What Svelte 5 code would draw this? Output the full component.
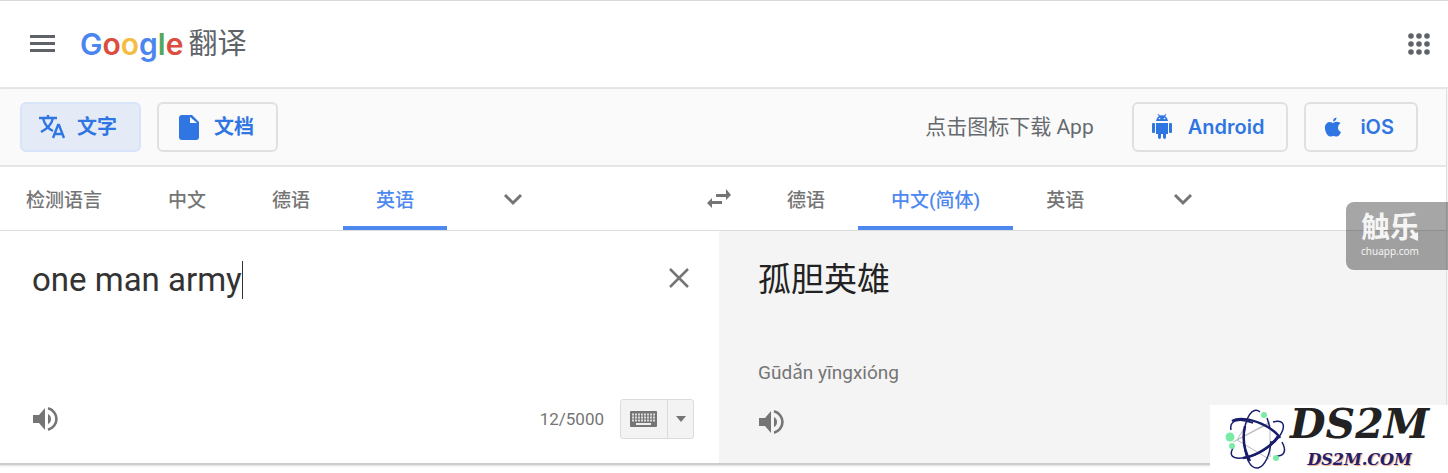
<script lang="ts">
	const MAX_LENGTH = 5000;
	const sourceLanguages = ['检测语言', '中文', '德语', '英语'];
	const targetLanguages = ['德语', '中文(简体)', '英语'];
	const brand = [
		{ letter: 'G', color: 'blue' },
		{ letter: 'o', color: 'red' },
		{ letter: 'o', color: 'yellow' },
		{ letter: 'g', color: 'blue' },
		{ letter: 'l', color: 'green' },
		{ letter: 'e', color: 'red' }
	];
	const dots = [4, 12, 20];

	let text = $state('one man army');
	let source = $state('英语');
	let target = $state('中文(简体)');
	let mode = $state('text');

	function swap() {
		const previous = source;
		source = sourceLanguages.includes(target) ? target : '中文';
		target = targetLanguages.includes(previous) ? previous : '中文(简体)';
	}
</script>

{#snippet chevron()}
	<svg width="20" height="20" viewBox="0 0 20 20" fill="none" aria-hidden="true">
		<path d="M2 6l8 8 8-8" stroke="currentColor" stroke-width="3" />
	</svg>
{/snippet}

{#snippet speaker()}
	<svg width="26" height="26" viewBox="0 0 26 26" fill="currentColor" aria-hidden="true">
		<path d="M1 9v8h6l6 7V2L7 9zM16 8v10q3-1.500 3-5t-3-5z" />
		<path d="M16 2.300a11 11 0 0 1 0 21.400" fill="none" stroke="currentColor" stroke-width="2.600" />
	</svg>
{/snippet}

<div class="page">
	<header>
		<button class="icon-button" aria-label="主菜单">
			<svg width="26" height="18" viewBox="0 0 26 18" fill="currentColor" aria-hidden="true">
				<path d="M0 0h25v3H0zM0 7h25v3H0zM0 14h25v3H0z" />
			</svg>
		</button>
		<a class="logo" href="/">
			<span class="brand">{#each brand as { letter, color }}<span class={color}>{letter}</span>{/each}</span>
			<span class="product">翻译</span>
		</a>
		<button class="icon-button apps" aria-label="Google 应用">
			<svg width="24" height="24" viewBox="0 0 24 24" fill="currentColor" aria-hidden="true">
				{#each dots as y}
					{#each dots as x}
						<circle cx={x} cy={y} r="2.800" />
					{/each}
				{/each}
			</svg>
		</button>
	</header>

	<main>
		<div class="toolbar">
			<button class="pill" class:selected={mode === 'text'} onclick={() => (mode = 'text')}>
				<svg width="26" height="26" viewBox="0 0 26 26" fill="none" stroke="currentColor" stroke-width="2.400" aria-hidden="true">
					<path d="M0 4h18M9 1v3M4 4q2 9 10 13M14 4q-2 9-12 14" />
					<path d="M14 24l5-13h1l5 13M16 20h7" />
				</svg>
				<span class="pill-label">文字</span>
			</button>
			<button class="pill" class:selected={mode === 'document'} onclick={() => (mode = 'document')}>
				<svg width="26" height="26" viewBox="0 0 26 26" aria-hidden="true">
					<path d="M6 1h10l7 7v15q0 3-3 3H6q-3 0-3-3V4q0-3 3-3z" fill="currentColor" />
					<path d="M14 3v6h7z" fill="#fff" />
				</svg>
				<span class="pill-label">文档</span>
			</button>
			<span class="download">点击图标下载 App</span>
			<a class="pill app" href="/android">
				<svg width="22" height="26" viewBox="0 0 22 26" fill="currentColor" aria-hidden="true">
					<path d="M5 7q0-3 3-5L6.500.800l.800-.800L9 1.600q2-.600 4 0L14.700 0l.800.800L14 2q3 2 3 5zM5 9h12v11h-2v3q0 2-1.500 2T12 23v-3h-2v3q0 2-1.500 2T7 23v-3H5z" />
					<rect x="1" y="9" width="3" height="10" rx="1" />
					<rect x="18" y="9" width="3" height="10" rx="1" />
					<circle cx="8.500" cy="4.500" r=".8" fill="#fafafa" />
					<circle cx="13.500" cy="4.500" r=".8" fill="#fafafa" />
				</svg>
				Android
			</a>
			<a class="pill app ios" href="/ios">
				<svg width="18" height="20" viewBox="0 0 18 20" fill="currentColor" aria-hidden="true">
					<path d="M9 6q4-2.500 7.500 0-2.500 1.500-2.500 4.500t3 4.500q-2 5-5 4.500-3-1-5 0-3 .500-5-4Q-.500 9 2.500 6.500 5 4 9 6zM9 4.500Q9 1 12.500.500 12.500 4 9 4.500z" />
				</svg>
				iOS
			</a>
		</div>

		<div class="languages">
			<div class="tabs" role="tablist" aria-label="源语言">
				{#each sourceLanguages as language, i}
					<button
						class="tab"
						class:first={i === 0}
						class:active={language === source}
						role="tab"
						aria-selected={language === source}
						onclick={() => (source = language)}>{language}</button>
				{/each}
				<button class="more" aria-label="更多源语言">{@render chevron()}</button>
			</div>
			<button class="swap" aria-label="切换语言" onclick={swap}>
				<svg width="26" height="20" viewBox="0 0 26 20" fill="currentColor" aria-hidden="true">
					<path d="M10 5h10V0l5 6-5 5V8H10zM16 12H6V9l-5 5 5 5v-4h10z" />
				</svg>
			</button>
			<div class="tabs" role="tablist" aria-label="目标语言">
				{#each targetLanguages as language}
					<button
						class="tab"
						class:active={language === target}
						role="tab"
						aria-selected={language === target}
						onclick={() => (target = language)}>{language}</button>
				{/each}
				<button class="more" aria-label="更多目标语言">{@render chevron()}</button>
			</div>
		</div>

		<div class="panels">
			<section class="panel">
				<div class="entry">
					<div class="field">
						<textarea aria-label="原文" rows="2" maxlength={MAX_LENGTH} spellcheck="false" bind:value={text}></textarea>
						<div class="caret-line" aria-hidden="true">
							<span class="measure">{text}</span><span class="caret"></span>
						</div>
					</div>
					<button class="clear" aria-label="清除原文" onclick={() => (text = '')}>
						<svg width="20" height="20" viewBox="0 0 20 20" fill="none" aria-hidden="true">
							<path d="M1 1l18 18M19 1L1 19" stroke="currentColor" stroke-width="2.500" />
						</svg>
					</button>
				</div>
				<div class="actions">
					<button class="icon-button" aria-label="收听原文">{@render speaker()}</button>
					<span class="count">{text.length}/{MAX_LENGTH}</span>
					<div class="keyboard">
						<button class="keys" aria-label="屏幕键盘">
							<svg width="28" height="16" viewBox="0 0 28 16" aria-hidden="true">
								<rect width="27" height="16" rx="1" fill="currentColor" />
								<path
									d="M2 3.500h23M2 6.500h23M2 9.500h23"
									stroke="#ddd"
									stroke-width="2"
									stroke-dasharray="2 1"
								/>
								<path d="M6 13h15" stroke="#eee" stroke-width="2" />
							</svg>
						</button>
						<button class="drop" aria-label="选择输入法">
							<svg width="10" height="6" viewBox="0 0 10 6" aria-hidden="true">
								<path d="M0 0h10L5 6z" fill="currentColor" />
							</svg>
						</button>
					</div>
				</div>
			</section>

			<section class="panel result">
				<p class="translation">孤胆英雄</p>
				<p class="pinyin">Gūdǎn yīngxióng</p>
				<div class="actions">
					<button class="icon-button" aria-label="收听译文">{@render speaker()}</button>
				</div>
			</section>
		</div>
	</main>

	<aside class="chuapp">
		<span class="chuapp-name">触乐</span>
		<span class="chuapp-site">chuapp.com</span>
		<svg width="9" height="9" viewBox="0 0 9 9" aria-hidden="true">
			<path d="M9 0v9L0 5z" fill="#f4f4f4" />
		</svg>
	</aside>

	<aside class="ds2m">
		<svg width="62" height="62" viewBox="0 0 62 62" fill="none" aria-hidden="true">
			<path d="M12 32L43 16M12 32l32 19M12 32L25 10M45 17v32M8 34l37-20" stroke="#bbb" />
			<g stroke="#171c6b" stroke-width="1.500">
				<path d="M35 4C28-2 19 9 19 30s7 31 14 30c7-2 12-13 13-27M42 10q2 5 3 11" />
				<path d="M6 22c-2-10 8-12 22-7M48 14c12-3 13 5 6 15-8 11-25 20-37 21-10 1-13-3-9-10" />
				<path d="M57 34c5 9 2 14-5 14" />
			</g>
			<path d="M7 13c7-4 21-2 34 5 7 4 12 8 14 12M20 18c-3 13 0 26 5 35M18 50c14-2 29-12 36-23" stroke="#171c6b" stroke-width="2.500" />
			<g fill="#7aeba5">
				<circle cx="39" cy="7" r="3" />
				<circle cx="5" cy="29" r="4.500" />
				<circle cx="7" cy="38" r="3" />
				<circle cx="51" cy="50" r="3" />
			</g>
		</svg>
		<div class="ds2m-text">
			<span class="ds2m-name">DS2M</span>
			<span class="ds2m-site">DS2M.COM</span>
		</div>
	</aside>
</div>

<style>
	:global(body) {
		margin: 0;
		background: #fff;
	}

	.page {
		position: relative;
		padding-bottom: 8px;
		overflow: hidden;
		color: #757575;
		font-family: Roboto, 'Noto Sans CJK SC', sans-serif;
	}

	button {
		padding: 0;
		border: 0;
		background: none;
		color: inherit;
		font: inherit;
		cursor: pointer;
	}

	a {
		color: inherit;
		text-decoration: none;
	}

	svg {
		display: block;
		flex: none;
	}

	header {
		display: flex;
		align-items: center;
		height: 86px;
		padding: 0 17px 0 30px;
		border-top: 1px solid #dadada;
		border-bottom: 2px solid #e6e6e6;
		color: #5f6368;
	}

	.logo {
		display: flex;
		align-items: center;
		gap: 5px;
		margin-left: 24px;
	}

	.brand {
		font-family: Inter, sans-serif;
		font-size: 30px;
		font-weight: 600;
		line-height: 40px;
	}

	.blue {
		color: #4a86f0;
	}

	.red {
		color: #db4e3f;
	}

	.yellow {
		color: #f3bd42;
	}

	.green {
		color: #57a75b;
	}

	.product {
		font-size: 29px;
		line-height: 40px;
	}

	.apps {
		margin-left: auto;
	}

	main {
		margin-right: 1px;
		border-right: 1px solid #e0e0e0;
		border-bottom: 2px solid #ccc;
		box-shadow: 0 1px 2px #ddd;
	}

	.toolbar {
		display: flex;
		align-items: center;
		gap: 16px;
		padding: 13px 28px 13px 20px;
		border-bottom: 2px solid #e6e6e6;
		background: #fafafa;
	}

	.pill {
		display: flex;
		align-items: center;
		gap: 12px;
		box-sizing: border-box;
		height: 50px;
		padding: 0 22px 0 17px;
		border: 2px solid #e0e0e3;
		border-radius: 6px;
		color: #3076e3;
		font-family: Inter, 'Noto Sans CJK SC', sans-serif;
		font-size: 20px;
		font-weight: 600;
	}

	.pill.app {
		gap: 15px;
		padding: 0 22px 0 17px;
	}

	.pill.ios {
		gap: 18px;
		padding-left: 18px;
	}

	.pill.selected {
		border-color: #d8e4fa;
		background: #e4ebf7;
	}

	.pill-label {
		padding-bottom: 4px;
	}

	.download {
		margin-left: auto;
		margin-right: 22px;
		padding-bottom: 4px;
		color: #666a6e;
		font-size: 21px;
	}

	.languages {
		display: grid;
		grid-template-columns: 684fr 70px 692fr;
		border-bottom: 1px solid #dcdcdc;
	}

	.tabs {
		display: flex;
		height: 63px;
	}

	.tab {
		padding: 4px 33px 0;
		border-bottom: 4px solid transparent;
		font-size: 19px;
		font-weight: 500;
		white-space: nowrap;
	}

	.tab.first {
		padding-left: 26px;
	}

	.tab.active {
		border-color: #4d88ef;
		color: #4d88ef;
	}

	.more {
		width: 132px;
		display: grid;
		place-items: center;
	}

	.swap {
		display: grid;
		place-items: center;
	}

	.panels {
		display: grid;
		grid-template-columns: 719fr 727fr;
		min-height: 232px;
	}

	.panel {
		display: flex;
		flex-direction: column;
		box-sizing: border-box;
		padding: 29px 25px 24px 32px;
	}

	.result {
		padding-left: 39px;
		padding-bottom: 21px;
		background: #f4f4f4;
	}

	.entry {
		display: flex;
		align-items: flex-start;
	}

	.field {
		position: relative;
		flex: 1;
	}

	textarea,
	.caret-line {
		display: block;
		box-sizing: border-box;
		width: 100%;
		padding: 0;
		border: 0;
		font-family: Roboto, 'Noto Sans CJK SC', sans-serif;
		font-size: 33px;
		line-height: 40px;
	}

	textarea {
		background: none;
		color: #333;
		caret-color: transparent;
		outline: none;
		resize: none;
		overflow: hidden;
	}

	.caret-line {
		position: absolute;
		top: 0;
		left: 0;
		display: flex;
		align-items: center;
		pointer-events: none;
	}

	.measure {
		visibility: hidden;
		white-space: pre;
	}

	.caret {
		height: 38px;
		border-left: 1px solid #333;
	}

	.clear {
		margin: 8px 5px 0 0;
	}

	.actions {
		display: flex;
		align-items: center;
		min-height: 40px;
		margin-top: auto;
	}

	.count {
		margin-left: auto;
		font-size: 17px;
	}

	.keyboard {
		display: flex;
		box-sizing: border-box;
		height: 40px;
		margin-left: 16px;
		border: 1px solid #dcdcdc;
		border-radius: 3px;
		background: #f3f3f3;
	}

	.keys,
	.drop {
		display: grid;
		place-items: center;
		width: 46px;
	}

	.drop {
		width: 26px;
		border-left: 1px solid #dcdcdc;
	}

	.translation {
		margin: 0;
		color: #222;
		font-size: 33px;
		line-height: 40px;
	}

	.pinyin {
		margin: 60px 0 0;
		font-size: 19px;
		line-height: 26px;
	}

	.chuapp {
		position: absolute;
		top: 202px;
		right: 0;
		display: flex;
		flex-direction: column;
		box-sizing: border-box;
		width: 102px;
		height: 68px;
		padding: 11px 15px;
		border-radius: 8px 0 0 8px;
		background: rgba(0, 0, 0, 0.35);
		color: #f4f4f4;
	}

	.chuapp-name {
		font-size: 29px;
		font-weight: 700;
		line-height: 31px;
	}

	.chuapp-site {
		font-family: 'Noto Sans', sans-serif;
		font-size: 10px;
		line-height: 14px;
	}

	.chuapp svg {
		position: absolute;
		top: 30px;
		left: 63px;
	}

	.ds2m {
		position: absolute;
		right: 0;
		bottom: 0;
		display: flex;
		align-items: center;
		gap: 3px;
		box-sizing: border-box;
		width: 238px;
		height: 68px;
		padding-left: 15px;
		background: #fff;
		font-family: 'DejaVu Serif', serif;
		font-style: italic;
	}

	.ds2m-text {
		display: flex;
		flex-direction: column;
		align-items: center;
		gap: 8px;
	}

	.ds2m-name {
		color: #222;
		font-size: 41px;
		font-weight: 700;
		line-height: 34px;
	}

	.ds2m-site {
		color: #20206b;
		font-size: 16px;
		font-weight: 700;
		line-height: 22px;
		text-shadow: 1px 1px 1px #f2a58c;
	}
</style>
